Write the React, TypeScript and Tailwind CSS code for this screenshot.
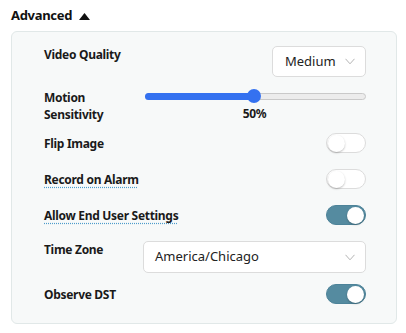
import React, { useState } from 'react';

const font = { fontFamily: '"Noto Sans", "Open Sans", sans-serif' };

const Chevron = () => (
  <svg width="10" height="7" viewBox="0 0 10 7" className="shrink-0">
    <polyline points="0.5,0.8 5,5.8 9.5,0.8" fill="none" stroke="#b4b4b4" strokeWidth="1" />
  </svg>
);

const Toggle: React.FC<{ on: boolean; onChange: () => void }> = ({ on, onChange }) => (
  <button
    type="button"
    onClick={onChange}
    className={`relative h-[20px] w-[40px] rounded-full border ${
      on ? 'bg-[#558ba0] border-[#4d8399]' : 'bg-white border-[#dcdcdc]'
    }`}
  >
    <span
      className={`absolute top-[0.5px] h-[17px] w-[17px] rounded-full bg-white shadow-[0_1px_2px_rgba(0,0,0,0.25)] ${
        on ? 'right-[1px]' : 'left-[0.5px]'
      }`}
    />
  </button>
);

const Label: React.FC<{ children: React.ReactNode; dotted?: boolean; className?: string }> = ({
  children,
  dotted,
  className = '',
}) => (
  <div
    className={`w-[99px] shrink-0 text-[12px] font-bold leading-[17px] tracking-[-0.3px] text-[#1a1a1a] ${className}`}
  >
    <span className={dotted ? 'underline decoration-dotted decoration-[#4c9ccb] underline-offset-[3px]' : ''}>
      {children}
    </span>
  </div>
);

export default function App() {
  const [flip, setFlip] = useState(false);
  const [record, setRecord] = useState(false);
  const [allow, setAllow] = useState(true);
  const [dst, setDst] = useState(true);
  const sensitivity = 50;

  return (
    <div className="h-[333px] w-[406px] bg-white pl-[11px] pr-[9px] pt-[7px]" style={font}>
      <div className="flex h-[18px] items-center gap-[7px]">
        <span className="text-[13px] font-bold tracking-[-0.3px] text-[#111]">Advanced</span>
        <svg width="11" height="7" viewBox="0 0 11 7">
          <polygon points="0,7 5.5,0 11,7" fill="#111" />
        </svg>
      </div>

      <div className="mt-[6px] rounded-[6px] border border-[#e1e8e8] bg-[#f7f9f9] pb-[19px] pl-[32px] pr-[30px] pt-[14px]">
        {/* Video quality */}
        <div className="flex items-start justify-between">
          <Label>Video Quality</Label>
          <div className="flex h-[31px] w-[94px] items-center justify-between rounded-[5px] border border-[#dcdcdc] bg-white pl-[12px] pr-[10px]">
            <span className="text-[13px] text-[#222]">Medium</span>
            <Chevron />
          </div>
        </div>

        {/* Motion sensitivity */}
        <div className="mt-[12px] flex items-start">
          <Label>
            Motion
            <br />
            Sensitivity
          </Label>
          <div className="flex flex-1 flex-col items-center">
            <div className="relative h-[14px] w-full">
              <div className="absolute left-[2px] right-0 top-[3.5px] h-[7px] rounded-full border border-[#c9c9c9] bg-[#ececec]" />
              <div
                className="absolute left-[2px] top-[3.5px] h-[7px] rounded-full bg-[#3471f0]"
                style={{ width: `calc(${sensitivity}% - 3px)` }}
              />
              <div
                className="absolute top-0 h-[14px] w-[14px] -translate-x-1/2 rounded-full bg-[#3471f0]"
                style={{ left: `calc(${sensitivity}% - 1px)` }}
              />
            </div>
            <span className="mt-[2px] text-[12px] font-bold leading-[17px] tracking-[-0.3px] text-[#1a1a1a]">
              {sensitivity}%
            </span>
          </div>
        </div>

        <div className="mt-[10px] flex h-[20px] items-center justify-between">
          <Label>Flip Image</Label>
          <Toggle on={flip} onChange={() => setFlip(!flip)} />
        </div>

        <div className="mt-[16px] flex h-[20px] items-center justify-between">
          <Label dotted className="w-auto">Record on Alarm</Label>
          <Toggle on={record} onChange={() => setRecord(!record)} />
        </div>

        <div className="mt-[16px] flex h-[20px] items-center justify-between">
          <Label dotted className="w-auto">Allow End User Settings</Label>
          <Toggle on={allow} onChange={() => setAllow(!allow)} />
        </div>

        <div className="mt-[16px] flex items-start">
          <Label>Time Zone</Label>
          <div className="flex h-[32px] flex-1 items-center justify-between rounded-[5px] border border-[#dcdcdc] bg-white pl-[11px] pr-[10px]">
            <span className="text-[13px] text-[#222]">America/Chicago</span>
            <Chevron />
          </div>
        </div>

        <div className="mt-[11px] flex h-[20px] items-center justify-between">
          <Label>Observe DST</Label>
          <Toggle on={dst} onChange={() => setDst(!dst)} />
        </div>
      </div>
    </div>
  );
}
